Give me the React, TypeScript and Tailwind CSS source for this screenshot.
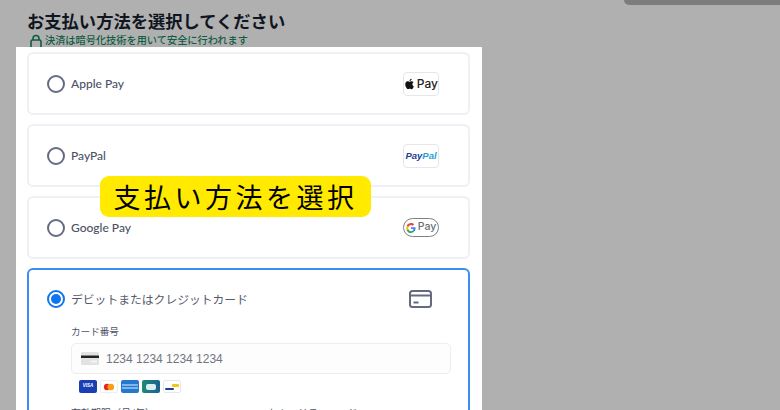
const jp = { fontFamily: '"Noto Sans CJK JP", sans-serif' };

function Radio({ checked }: { checked?: boolean }) {
  if (checked) {
    return (
      <span className="flex h-[18px] w-[18px] items-center justify-center rounded-full border-2 border-[#0e74f0]">
        <span className="h-[10px] w-[10px] rounded-full bg-[#0e74f0]" />
      </span>
    );
  }
  return <span className="h-[18px] w-[18px] rounded-full border-2 border-[#646a80]" />;
}

function ApplePayLogo() {
  return (
    <span className="flex h-[24px] w-[36px] items-center justify-center gap-[1px] rounded-[4px] border border-[#e6e6ea] bg-white">
      <svg width="12" height="14" viewBox="0 0 24 24" fill="#111">
        <path d="M17.05 12.54c-.03-2.7 2.2-4 2.3-4.06-1.25-1.83-3.2-2.08-3.9-2.11-1.66-.17-3.24.98-4.08.98-.84 0-2.14-.95-3.52-.93-1.81.03-3.48 1.05-4.41 2.67-1.88 3.26-.48 8.1 1.35 10.75.9 1.3 1.96 2.75 3.36 2.7 1.35-.05 1.86-.87 3.49-.87 1.63 0 2.09.87 3.52.85 1.45-.03 2.37-1.32 3.26-2.63 1.03-1.5 1.45-2.97 1.47-3.05-.03-.01-2.82-1.08-2.84-4.3zM14.4 4.6c.74-.9 1.24-2.15 1.1-3.4-1.07.04-2.36.71-3.13 1.6-.68.79-1.28 2.06-1.12 3.28 1.19.09 2.41-.61 3.15-1.48z" />
      </svg>
      <span className="text-[12px] font-medium leading-none text-[#222]" style={{ fontFamily: 'Inter, sans-serif' }}>Pay</span>
    </span>
  );
}

function PayPalLogo() {
  return (
    <span className="flex h-[24px] w-[36px] items-center justify-center rounded-[4px] border border-[#e6e6ea] bg-white">
      <span className="text-[9.5px] font-bold italic leading-none" style={{ fontFamily: '"Liberation Sans", sans-serif' }}>
        <span className="text-[#1f3f9b]">Pay</span>
        <span className="text-[#2a9fd6]">Pal</span>
      </span>
    </span>
  );
}

function GooglePayLogo() {
  return (
    <span className="flex h-[19px] w-[36px] items-center justify-center gap-[2px] rounded-full border border-[#808080] bg-white">
      <svg width="10" height="10" viewBox="0 0 24 24">
        <path fill="#4285F4" d="M23 12.3c0-.8-.1-1.6-.2-2.3H12v4.4h6.2c-.3 1.4-1.1 2.6-2.3 3.4v2.8h3.7c2.2-2 3.4-5 3.4-8.3z" />
        <path fill="#34A853" d="M12 24c3.1 0 5.7-1 7.6-2.8l-3.7-2.8c-1 .7-2.4 1.1-3.9 1.1-3 0-5.5-2-6.4-4.7H1.8v2.9C3.7 21.4 7.6 24 12 24z" />
        <path fill="#FBBC05" d="M5.6 14.8c-.5-1.4-.5-3 0-4.4V7.5H1.8c-1.6 3.1-1.6 6.8 0 9.9l3.8-2.6z" />
        <path fill="#EA4335" d="M12 4.8c1.7 0 3.2.6 4.4 1.7l3.3-3.3C17.7 1.2 15.100 0 12 0 7.600 0 3.700 2.600 1.800 6.500l3.800 2.900C6.500 6.800 9 4.800 12 4.800z" />
      </svg>
      <span className="text-[10.5px] font-medium leading-none text-[#6a6e73]" style={{ fontFamily: 'Inter, sans-serif' }}>Pay</span>
    </span>
  );
}

function PayOption({ label, logo }: { label: string; logo: React.ReactNode }) {
  return (
    <div className="flex h-[63px] items-center justify-between rounded-[6px] border-2 border-[#eff0f4] bg-white pl-[18px] pr-[29px]">
      <div className="flex items-center gap-[6px]">
        <Radio />
        <span className="text-[12px] font-medium text-[#4c5266]" style={{ fontFamily: 'Lato, sans-serif' }}>{label}</span>
      </div>
      {logo}
    </div>
  );
}

function Brands() {
  return (
    <div className="ml-[8px] mt-[6px] flex gap-[3px]">
      <span className="flex h-[13px] w-[18px] items-center justify-center rounded-[2px] bg-[#1a3fb5] text-[4.5px] font-bold italic text-white" style={{ fontFamily: '"Liberation Sans", sans-serif' }}>VISA</span>
      <span className="flex h-[13px] w-[18px] items-center justify-center rounded-[2px] border border-[#eeeeee] bg-white">
        <svg width="12" height="8" viewBox="0 0 12 8">
          <circle cx="4.200" cy="4" r="3.300" fill="#e8241c" />
          <circle cx="7.800" cy="4" r="3.300" fill="#f79e1b" />
        </svg>
      </span>
      <span className="flex h-[13px] w-[18px] flex-col justify-center gap-[1px] rounded-[2px] bg-[#2478cf] px-[1px]">
        <span className="h-[2px] bg-[#7fb6ea]" />
        <span className="h-[2px] bg-[#7fb6ea]" />
      </span>
      <span className="flex h-[13px] w-[18px] items-center justify-center rounded-[2px] bg-gradient-to-r from-[#1d8a78] to-[#1f5f8e]">
        <span className="h-[6px] w-[10px] rounded-[2px] bg-[#d8eef0]" />
      </span>
      <span className="flex h-[13px] w-[18px] flex-col justify-center rounded-[2px] border border-[#e8e8ec] bg-white px-[1px]">
        <span className="ml-[7px] h-[3px] w-[7px] rounded-[1px] bg-[#f5c518]" />
        <span className="mt-[1px] h-[2px] w-[9px] rounded-[1px] bg-[#23408f]" />
      </span>
    </div>
  );
}

export default function App() {
  return (
    <div className="relative flex h-[410px] w-[780px] flex-col overflow-hidden bg-[#b0b0b0] pl-[16px]" style={jp}>
      <div className="absolute left-[624px] top-[-10px] h-[15px] w-[170px] rounded-[5px] bg-[#7d7d7f]" />
      <div className="h-[47px] pl-[11px] pt-[9px]">
        <h1 className="text-[17.3px] font-bold leading-[24px] text-[#10161f]">お支払い方法を選択してください</h1>
        <div className="flex items-start gap-[2px] pl-[2px]">
          <svg width="14" height="14" viewBox="0 0 14 14" fill="none" stroke="#115d44" strokeWidth="1.600" className="mt-[1px] shrink-0">
            <rect x="2" y="6" width="10" height="8" rx="1.500" />
            <path d="M4 6V4.500a3 3 0 0 1 6 0V6" />
          </svg>
          <span className="text-[10.200px] font-medium leading-[14px] text-[#115d44]">決済は暗号化技術を用いて安全に行われます</span>
        </div>
      </div>

      <div className="relative flex w-[466px] flex-1 flex-col gap-[9px] bg-white pl-[11px] pr-[12px] pt-[5px]">
        <PayOption label="Apple Pay" logo={<ApplePayLogo />} />
        <PayOption label="PayPal" logo={<PayPalLogo />} />
        <PayOption label="Google Pay" logo={<GooglePayLogo />} />

        <div className="h-[160px] shrink-0 rounded-[6px] border-2 border-[#3b8df0] bg-white pl-[18px] pr-[18px] pt-[20px]">
          <div className="flex items-center justify-between pr-[18px]">
            <div className="flex items-center gap-[6px]">
              <Radio checked />
              <span className="text-[11.800px] text-[#555a6b]">デビットまたはクレジットカード</span>
            </div>
            <svg width="23" height="18" viewBox="0 0 23 18" fill="none" stroke="#646a80" strokeWidth="2">
              <rect x="1" y="1" width="21" height="16" rx="2.500" />
              <path d="M1 5.500h21" />
              <path d="M4.500 12.500h5" />
            </svg>
          </div>
          <div className="pl-[24px]">
            <div className="mt-[16px] text-[9.600px] leading-[14px] text-[#4c5266]">カード番号</div>
            <div className="mt-[5px] flex h-[31px] w-[380px] items-center gap-[8px] rounded-[5px] border border-[#eceef1] bg-[#fdfdfd] pl-[9px]">
              <svg width="18" height="13" viewBox="0 0 18 13">
                <rect width="18" height="13" rx="1" fill="#e2e2e2" />
                <rect y="3.500" width="18" height="2.500" fill="#222" />
                <rect x="10" y="8.500" width="6" height="2" fill="#f4f4f4" />
              </svg>
              <span className="-ml-[1px] text-[12px] text-[#71757f]" style={{ fontFamily: '"Liberation Sans", sans-serif' }}>1234 1234 1234 1234</span>
            </div>
            <Brands />
            <div className="mt-[13px] flex text-[10px] leading-[14px] text-[#4c5266]">
              <span className="w-[197px]">有効期限（月/年）</span>
              <span>セキュリティコード</span>
            </div>
          </div>
        </div>
      </div>

      <div className="absolute left-[100px] top-[176px] flex h-[41px] w-[271px] items-center justify-center rounded-[9px] bg-[#ffea00]">
        <span className="text-[27px] font-normal leading-none tracking-[3.5px] text-black">支払い方法を選択</span>
      </div>
    </div>
  );
}
